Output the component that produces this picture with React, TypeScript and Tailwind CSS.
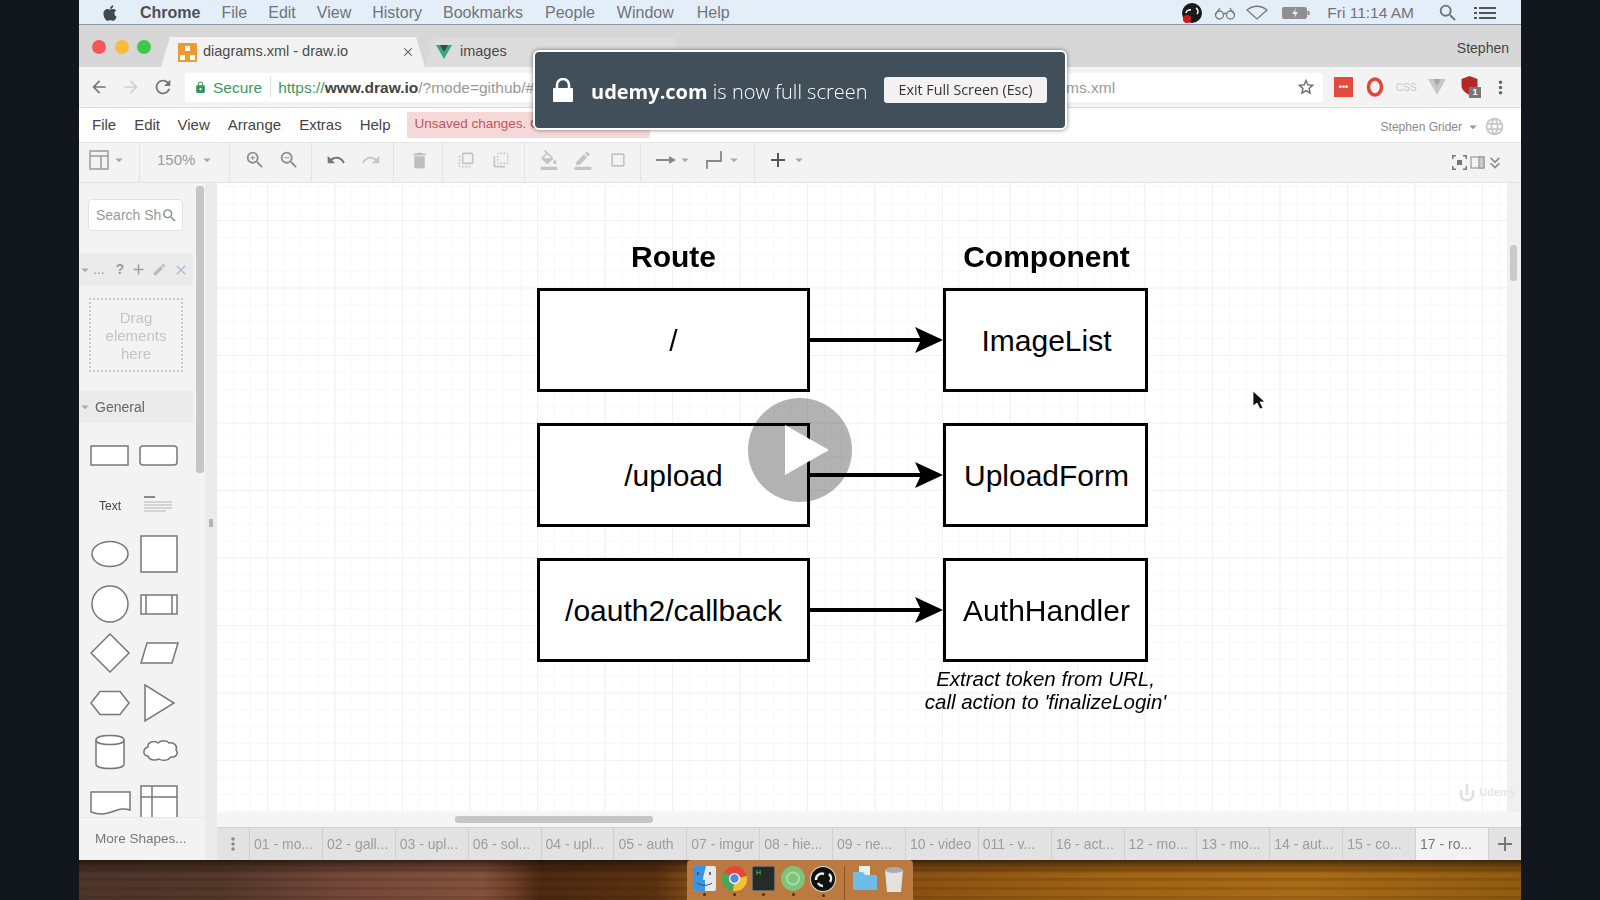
import type { ReactNode } from "react";
import { FaApple } from "react-icons/fa";
import {
  MdAdd,
  MdArrowBack,
  MdArrowDropDown,
  MdArrowForward,
  MdBorderColor,
  MdClose,
  MdCropSquare,
  MdDelete,
  MdEdit,
  MdFlipToBack,
  MdFlipToFront,
  MdFormatColorFill,
  MdKeyboardDoubleArrowDown,
  MdLanguage,
  MdLock,
  MdMoreVert,
  MdRedo,
  MdRefresh,
  MdSearch,
  MdStarBorder,
  MdUndo,
  MdZoomIn,
  MdZoomOut,
} from "react-icons/md";

const sans = "font-['Liberation_Sans',Arial,sans-serif]";

const Caret = ({ className = "" }: { className?: string }) => (
  <MdArrowDropDown className={`text-[18px] text-[#aaa] ${className}`} />
);

const MacMenuBar = () => (
  <div className="flex h-[25px] shrink-0 items-center border-b border-[#8d98a5] bg-[#e4eef8] pt-[1px] text-[16px] text-[#6f747b]">
    <FaApple className="ml-[22px] text-[18px] text-[#44484d]" />
    <span className="ml-[21px] font-bold text-[#4d5156]">Chrome</span>
    <span className="ml-[21px]">File</span>
    <span className="ml-[21px]">Edit</span>
    <span className="ml-[21px]">View</span>
    <span className="ml-[21px]">History</span>
    <span className="ml-[21px]">Bookmarks</span>
    <span className="ml-[22px]">People</span>
    <span className="ml-[22px]">Window</span>
    <span className="ml-[23px]">Help</span>
    <div className="ml-auto flex items-center">
      <svg width="20" height="20" viewBox="0 0 20 20">
        <circle cx="10" cy="10" r="10" fill="#1a1a1a" />
        <path d="M4 10a4 4 0 0 1 5-3M14 5a4 4 0 0 1 1 6M9 15a4 4 0 0 1 -3-2" stroke="#eee" strokeWidth="1.6" fill="none" />
        <circle cx="5" cy="16" r="4" fill="#d9141f" />
      </svg>
      <svg className="ml-[12px]" width="22" height="14" viewBox="0 0 22 14" fill="none" stroke="#777" strokeWidth="1.3">
        <circle cx="5.5" cy="9" r="4" />
        <circle cx="16.5" cy="9" r="4" />
        <path d="M9.5 8c1-1 2-1 3 0M2 8l4-6M20 8l-4-6" />
      </svg>
      <svg className="ml-[10px]" width="22" height="15" viewBox="0 0 22 15" fill="none" stroke="#777" strokeWidth="1.3">
        <path d="M1 5c6-5 14-5 20 0L11 14z" />
      </svg>
      <svg className="ml-[14px]" width="28" height="14" viewBox="0 0 28 14">
        <rect x="0" y="1" width="25" height="12" rx="2" fill="#8f8f8f" />
        <rect x="25.500" y="5" width="2" height="4" fill="#888" />
        <path d="M14 2l-4 6h3l-1 4 4-6h-3z" fill="#e4eef8" />
      </svg>
      <span className="ml-[17px] text-[15.500px]">Fri 11:14 AM</span>
      <MdSearch className="ml-[23px] text-[22px] text-[#6f747b]" />
      <svg className="ml-[15px] mr-[25px]" width="22" height="14" viewBox="0 0 22 14" fill="#555">
        <rect x="0" y="1" width="3" height="2" />
        <rect x="5" y="1" width="17" height="2" />
        <rect x="0" y="6" width="3" height="2" />
        <rect x="5" y="6" width="17" height="2" />
        <rect x="0" y="11" width="3" height="2" />
        <rect x="5" y="11" width="17" height="2" />
      </svg>
    </div>
  </div>
);

const TabStrip = () => (
  <div className="flex h-[42px] shrink-0 items-end bg-[#d7d7d7] text-[14.5px] text-[#4a4a4a]">
    <div className="mb-[13px] ml-[13px] flex items-center gap-[8.500px] self-end">
      <span className="h-[14px] w-[14px] rounded-full bg-[#f4575a]" />
      <span className="h-[14px] w-[14px] rounded-full bg-[#f9bb3c]" />
      <span className="h-[14px] w-[14px] rounded-full bg-[#3fc94b]" />
    </div>
    <div className="ml-[10px] flex h-[30px] w-[264px] items-center bg-[#f2f2f2] pl-[17px] pr-[10px] [clip-path:polygon(9px_0,calc(100%-9px)_0,100%_100%,0_100%)]">
      <svg width="19" height="19" viewBox="0 0 19 19" className="shrink-0">
        <rect width="19" height="19" rx="1" fill="#ef9a2f" />
        <rect x="7" y="3" width="5" height="5" fill="#fff" />
        <rect x="2" y="12" width="5" height="5" fill="#fff" />
        <rect x="12" y="12" width="5" height="5" fill="#fff" />
      </svg>
      <span className="ml-[6px]">diagrams.xml - draw.io</span>
      <MdClose className="ml-auto text-[14px] text-[#666]" />
    </div>
    <div className="flex h-[30px] w-[258px] items-center bg-[#dcdcdc] pl-[11px] text-[#4a4a4a] [clip-path:polygon(9px_0,calc(100%-9px)_0,100%_100%,0_100%)]">
      <svg width="16" height="14" viewBox="0 0 16 14">
        <path d="M0 0h16L8 14z" fill="#3aa776" />
        <path d="M4 0h8L8 7z" fill="#2d4a5c" />
      </svg>
      <span className="ml-[8px]">images</span>
    </div>
    <span className="ml-auto mb-[8px] mr-[12px] text-[14px] text-[#444]">Stephen</span>
  </div>
);

const UrlBar = () => (
  <div className="flex h-[41px] shrink-0 items-center border-b border-[#dcdcdc] bg-[#f3f3f3]">
    <MdArrowBack className="ml-[10px] text-[20px] text-[#777]" />
    <MdArrowForward className="ml-[12px] text-[20px] text-[#d0d0d0]" />
    <MdRefresh className="ml-[11px] text-[22px] text-[#777]" />
    <div className="ml-[11px] flex h-[29px] w-[1138px] items-center rounded-[3px] bg-white pl-[9px] text-[15.500px]">
      <MdLock className="text-[13px] text-[#2f9a58]" />
      <span className="ml-[6px] pt-[2px] text-[#3d9a62]">Secure</span>
      <span className="ml-[8px] h-[20px] w-px bg-[#ddd]" />
      <span className="ml-[7px] w-[837px] shrink-0 overflow-hidden whitespace-nowrap pt-[2px] text-right text-[#999]">
        <span className="float-left">
          <span className="text-[#3d9a62]">https://</span>
          <span className="font-bold text-[#444]">www.draw.io</span>
          /?mode=github/#Hsgrider
        </span>
        ms.xml
      </span>
      <MdStarBorder className="ml-auto mr-[7px] text-[20px] text-[#666]" />
    </div>
    <div className="ml-[11px] flex h-[20px] w-[19px] items-center justify-center bg-[#e34b3f] text-[9px] font-bold leading-none text-white">
      •••
    </div>
    <svg className="ml-[13px]" width="18" height="20" viewBox="0 0 18 20" fill="none" stroke="#e2453c" strokeWidth="3.500">
      <ellipse cx="9" cy="10" rx="6.500" ry="8" />
    </svg>
    <span className="ml-[12px] w-[19px] text-[10px] text-[#c9c9c9]">CSS</span>
    <svg className="ml-[13px]" width="18" height="16" viewBox="0 0 18 16">
      <path d="M0 0h18L9 16z" fill="#c8c8c8" />
      <path d="M5 0h8L9 7z" fill="#a8a8a8" />
    </svg>
    <div className="relative ml-[15px] h-[22px] w-[20px]">
      <svg width="17" height="19" viewBox="0 0 17 19">
        <path d="M8.500 0l8 3v7c0 4-4 7-8 9-4-2-8-5-8-9V3z" fill="#b5282a" />
      </svg>
      <span className="absolute bottom-0 right-0 flex h-[11px] w-[12px] items-center justify-center bg-[#777] text-[9px] font-bold text-white">
        1
      </span>
    </div>
    <MdMoreVert className="ml-[9px] text-[21px] text-[#666]" />
  </div>
);

const AppMenu = () => (
  <div className="flex h-[35px] shrink-0 items-center border-b border-[#e4e4e4] bg-white text-[15px] text-[#444]">
    <span className="ml-[13px]">File</span>
    <span className="ml-[18px]">Edit</span>
    <span className="ml-[17.500px]">View</span>
    <span className="ml-[18px]">Arrange</span>
    <span className="ml-[18px]">Extras</span>
    <span className="ml-[18px]">Help</span>
    <div className="ml-[16px] flex h-[26px] w-[243px] items-center rounded-[2px] bg-[#f7d8d9] pb-[2px] pl-[8px] text-[13.500px] text-[#bb5660]">
      Unsaved changes. Click here to save.
    </div>
    <div className="ml-auto flex items-center pr-[16px] pt-[3px] text-[12px] text-[#8a8a8a]">
      Stephen Grider
      <MdArrowDropDown className="ml-[2px] text-[18px] text-[#999]" />
      <MdLanguage className="ml-[2px] text-[21px] text-[#c7c7c7]" />
    </div>
  </div>
);

const Group = ({ className, children }: { className: string; children: ReactNode }) => (
  <div className={`flex h-full shrink-0 items-center border-r border-[#e4e4e4] pb-[5px] ${className}`}>{children}</div>
);

const Toolbar = () => (
  <div className="flex h-[40px] shrink-0 items-center border-b border-[#e2e2e2] bg-[#f3f3f3] text-[#a8a8a8]">
    <Group className="w-[61px] pl-[10px]">
      <svg width="20" height="20" viewBox="0 0 20 20" fill="none" stroke="#9a9a9a" strokeWidth="1.500">
        <rect x="1" y="1" width="18" height="18" />
        <path d="M1 6h18M12 6v13" />
      </svg>
      <Caret className="ml-[1px]" />
    </Group>
    <Group className="w-[90px] pl-[17px] text-[15px] text-[#9a9a9a]">
      150%
      <Caret className="ml-[3px]" />
    </Group>
    <Group className="w-[82px] pl-[14px] text-[22px] text-[#8f8f8f]">
      <MdZoomIn />
      <MdZoomOut className="ml-[12px]" />
    </Group>
    <Group className="w-[82px] pl-[14px] text-[20px]">
      <MdUndo className="text-[#777]" />
      <MdRedo className="ml-[15px] text-[#c8c8c8]" />
    </Group>
    <Group className="w-[49px] pl-[15px] text-[21px] text-[#bdbdbd]">
      <MdDelete />
    </Group>
    <Group className="w-[82px] pl-[13px] text-[20px] text-[#c4c4c4]">
      <MdFlipToFront />
      <MdFlipToBack className="ml-[15px]" />
    </Group>
    <Group className="w-[116px] pl-[14px] text-[20px] text-[#c4c4c4]">
      <MdFormatColorFill />
      <MdBorderColor className="ml-[14px]" />
      <MdCropSquare className="ml-[15px]" />
    </Group>
    <Group className="w-[114px] pl-[15px]">
      <svg width="20" height="10" viewBox="0 0 20 10">
        <path d="M0 5h15" stroke="#888" strokeWidth="2" />
        <path d="M13 1l7 4-7 4z" fill="#888" />
      </svg>
      <Caret />
      <svg className="ml-[10px]" width="20" height="20" viewBox="0 0 20 20" fill="none" stroke="#888" strokeWidth="1.800">
        <path d="M3 19v-8h14V1" />
      </svg>
      <Caret className="ml-[1px]" />
    </Group>
    <div className="flex items-center pb-[5px] pl-[11px]">
      <MdAdd className="text-[24px] text-[#555]" />
      <Caret />
    </div>
    <div className="ml-auto flex items-center gap-[3px] pr-[16px] text-[#9a9a9a]">
      <svg width="15" height="15" viewBox="0 0 15 15" fill="#777">
        <path d="M0 0h4v1.500H1.500V4H0zM11 0h4v4h-1.500V1.500H11zM0 11h1.500v2.500H4V15H0zM13.500 11H15v4h-4v-1.500h2.500z" />
        <rect x="5" y="5" width="5" height="5" />
      </svg>
      <svg width="15" height="13" viewBox="0 0 15 13" fill="none" stroke="#999" strokeWidth="1.200">
        <rect x="1" y="1" width="13" height="11" />
        <rect x="9" y="1" width="5" height="11" fill="#ccc" />
      </svg>
      <MdKeyboardDoubleArrowDown className="-ml-[3px] text-[20px] text-[#888]" />
    </div>
  </div>
);

const shape = "fill-white stroke-[#777] [stroke-width:1.5]";

const shapes: ReactNode[] = [
  <rect className={shape} x="5" y="15" width="37" height="19" />,
  <rect className={shape} x="5" y="15" width="37" height="19" rx="3" />,
  <text x="24" y="29" textAnchor="middle" fontSize="12" fill="#444" fontFamily="Liberation Sans">Text</text>,
  <>
    <rect x="9" y="15" width="11" height="2" fill="#888" />
    <path d="M9 21h28M9 24h28M9 27h28M9 30h22" stroke="#d4d4d4" strokeWidth="2" />
  </>,
  <ellipse className={shape} cx="24" cy="24" rx="18" ry="12.500" />,
  <rect className={shape} x="6" y="6" width="36" height="36" />,
  <circle className={shape} cx="24" cy="24" r="18" />,
  <>
    <rect className={shape} x="6" y="15" width="36" height="19" />
    <path d="M11 15v19M37 15v19" className={shape} />
  </>,
  <path className={shape} d="M24 5l19 19-19 19L5 24z" />,
  <path className={shape} d="M12 14h31l-6 20H6z" />,
  <path className={shape} d="M14 12.500h20L43 24l-9 11.500H14L5 24z" />,
  <path className={shape} d="M10 6l29 18-29 18z" />,
  <>
    <path className={shape} d="M10 12c0-6 28-6 28 0v24c0 6-28 6-28 0z" />
    <path className={shape} d="M10 12c0 6 28 6 28 0" />
  </>,
  <path
    className={shape}
    d="M13 19c-1-5 7-7 10-4 3-3 9-3 11 0 5-1 9 3 7 7 3 3 0 8-5 7-3 4-9 4-12 2-4 2-10 1-11-3-5 0-6-7 0-9z"
  />,
  <path className={shape} d="M5 14h39v18c-14-5-20 9-39 2z" />,
  <>
    <rect className={shape} x="6" y="8" width="36" height="50" />
    <path className={shape} d="M6 19h36M17 8v50" />
  </>,
];

const Sidebar = () => (
  <div className="flex w-[126px] shrink-0 flex-col bg-[#f3f3f3]">
    <div className="flex min-h-0 flex-1">
      <div className="flex w-[117px] flex-col">
        <div className="ml-[9px] mt-[16px] flex h-[33px] w-[95px] items-center justify-between rounded-[4px] border border-[#e2e2e2] bg-white pl-[7px] pr-[4px] text-[14px] text-[#999]">
          <span className="whitespace-nowrap">Search Sh</span>
          <MdSearch className="shrink-0 text-[17px] text-[#888]" />
        </div>
        <div className="mt-[22px] flex h-[34px] w-[114px] items-center bg-[#ebebeb] text-[14px] text-[#999]">
          <Caret className="-ml-[3px] -mr-[1px]" />
          <span>...</span>
          <span className="ml-[11px] font-bold">?</span>
          <MdAdd className="ml-[6px] text-[17px]" />
          <MdEdit className="ml-[5px] text-[15px] text-[#bbb]" />
          <MdClose className="ml-[6px] text-[16px] text-[#a9bed4]" />
        </div>
        <div className="ml-[10px] mt-[12px] flex h-[76px] w-[94px] items-center justify-center border-2 border-dotted border-[#c9c9c9] pt-[2px] text-center text-[15px] leading-[18px] text-[#c4c4c4]">
          Drag
          <br />
          elements
          <br />
          here
        </div>
        <div className="mt-[19px] flex h-[32px] w-[114px] shrink-0 items-center bg-[#ebebeb] text-[14px] text-[#666]">
          <Caret className="-ml-[3px]" />
          <span className="ml-[1px]">General</span>
        </div>
        <div className="ml-[7px] mt-[8px] grid grid-cols-[49px_49px] auto-rows-[49.500px] overflow-hidden">
          {shapes.map((s, i) => (
            <svg key={i} width="48" height="48" viewBox="0 0 48 48" className="overflow-hidden">
              {s}
            </svg>
          ))}
        </div>
      </div>
      <div className="w-[9px] pt-[3px]">
        <div className="h-[287px] w-[8px] rounded-[3px] bg-[#c6c6c6]" />
      </div>
    </div>
    <div className="flex h-[43px] shrink-0 items-center border-t border-[#e8e8e8] pl-[16px] text-[13.500px] text-[#777]">
      More Shapes...
    </div>
  </div>
);

const Splitter = () => (
  <div className="flex w-[12px] shrink-0 items-center justify-center bg-[#ebebeb] pt-[2px]">
    <span className="h-[8px] w-[4px] bg-[#b5b5b5]" />
  </div>
);

const Arrow = () => (
  <svg width="133" height="36" viewBox="0 0 133 36" className="shrink-0">
    <path d="M0 18h112" stroke="#000" strokeWidth="4" />
    <path d="M105 5l28 13-28 13 6-13z" fill="#000" />
  </svg>
);

const rows = [
  ["/", "ImageList"],
  ["/upload", "UploadForm"],
  ["/oauth2/callback", "AuthHandler"],
];

const Diagram = () => (
  <div className="pl-[320px] pt-[52px] text-black">
    <div className="flex h-[42px] items-center text-[30px] font-bold">
      <span className="w-[273px] text-center">Route</span>
      <span className="ml-[133px] w-[205px] pl-[2px] text-center">Component</span>
    </div>
    <div className="mt-[11px] flex flex-col gap-[31px] text-[30px]">
      {rows.map(([route, component]) => (
        <div key={route} className="flex items-center">
          <div className="flex h-[104px] w-[273px] shrink-0 items-center justify-center border-[3px] border-black bg-white pt-[1px]">
            {route}
          </div>
          <Arrow />
          <div className="flex h-[104px] w-[205px] shrink-0 items-center justify-center border-[3px] border-black bg-white pl-[2px] pt-[1px]">
            {component}
          </div>
        </div>
      ))}
    </div>
    <div className="ml-[406px] mt-[5px] w-[205px] whitespace-nowrap text-center text-[20.500px] italic leading-[23px]">
      <div className="-mx-[40px]">
        Extract token from URL,
        <br />
        call action to 'finalizeLogin'
      </div>
    </div>
  </div>
);

const Canvas = () => (
  <div className="relative flex min-w-0 flex-1 flex-col">
    <div className="flex min-h-0 flex-1">
      <div className="relative min-w-0 flex-1 overflow-hidden bg-white bg-[linear-gradient(#f1f1f1_1px,transparent_1px),linear-gradient(90deg,#f1f1f1_1px,transparent_1px),linear-gradient(#f8f8f8_1px,transparent_1px),linear-gradient(90deg,#f8f8f8_1px,transparent_1px)] bg-[size:67.500px_67.500px,67.500px_67.500px,16.875px_16.875px,16.875px_16.875px] bg-[position:50px_37px,50px_37px,50px_37px,50px_37px]">
        <Diagram />
        {/* mouse pointer sitting on the canvas */}
        <svg className="absolute left-[1035px] top-[207px]" width="14" height="20" viewBox="0 0 14 20">
          <path d="M1 1v15l4-3 3 6 3-1-3-6h5z" fill="#111" stroke="#fff" strokeWidth="0.800" />
        </svg>
      </div>
      <div className="w-[14px] shrink-0 bg-[#f0f0f0] pl-[3px] pt-[62px]">
        <div className="h-[36px] w-[7px] rounded-[3px] bg-[#c9c9c9]" />
      </div>
    </div>
    <div className="flex h-[15px] shrink-0 items-center bg-[#f5f5f5] pl-[238px]">
      <div className="h-[7px] w-[198px] rounded-[3px] bg-[#c6c6c6]" />
    </div>
    {/* udemy watermark runs over the right scrollbar */}
    <div className="absolute bottom-[25px] right-[5px] flex items-center text-[11px] font-bold text-[#e6e6e6]">
      <svg className="mr-[4px]" width="16" height="20" viewBox="0 0 16 20" fill="none" stroke="#e0e0e0" strokeWidth="2.500">
        <path d="M2 8v5c0 7 12 7 12 0V8M8 2v11" />
      </svg>
      Udemy
    </div>
  </div>
);

const pages = [
  "01 - mo...",
  "02 - gall...",
  "03 - upl...",
  "06 - sol...",
  "04 - upl...",
  "05 - auth",
  "07 - imgur",
  "08 - hie...",
  "09 - ne...",
  "10 - video",
  "011 - v...",
  "16 - act...",
  "12 - mo...",
  "13 - mo...",
  "14 - aut...",
  "15 - co...",
];

const PageTabs = () => (
  <div className="flex h-[33px] shrink-0 items-stretch border-t border-[#cfcfcf] bg-[#e2e2e2] text-[14px] text-[#9c9c9c]">
    <div className="flex w-[33px] shrink-0 items-center justify-center border-r border-[#cfcfcf]">
      <MdMoreVert className="text-[20px] text-[#888]" />
    </div>
    {pages.map((p) => (
      <div key={p} className="flex flex-1 items-center whitespace-nowrap border-r border-[#d0d0d0] pl-[4px]">
        {p}
      </div>
    ))}
    <div className="flex flex-1 items-center whitespace-nowrap bg-[#f2f2f2] pl-[4px] text-[#777]">17 - ro...</div>
    <div className="flex w-[33px] shrink-0 items-center justify-center border-l border-[#cfcfcf]">
      <MdAdd className="text-[24px] font-bold text-[#777]" />
    </div>
  </div>
);

const DockDot = () => <span className="h-[3px] w-[3px] rounded-full bg-[#5a2a10]" />;

const Dock = () => (
  <div className="mx-auto flex h-[40px] w-[226px] items-start rounded-t-[4px] bg-[#bb7a40] pl-[6px] pt-[6px]">
    <div className="flex flex-col items-center gap-[2px]">
      <svg width="23" height="25" viewBox="0 0 23 25">
        <rect width="23" height="25" rx="2" fill="#e4e9ee" />
        <path d="M0 2a2 2 0 0 1 2-2h11c-2 8-3 11-3 14h2v11H2a2 2 0 0 1-2-2z" fill="#3a94e6" />
        <path d="M5 6v3M17 6v3" stroke="#3b4a58" strokeWidth="1.500" />
        <path d="M4 17c5 3 11 3 15 0" stroke="#3b4a58" strokeWidth="1" fill="none" />
      </svg>
      <DockDot />
    </div>
    <div className="ml-[6px] flex flex-col items-center gap-[2px]">
      <svg width="25" height="25" viewBox="0 0 25 25">
        <circle cx="12.500" cy="12.500" r="12.500" fill="#e8453c" />
        <path d="M12.500 12.500L1.500 6A12.500 12.500 0 0 0 11 25z" fill="#4aa65a" />
        <path d="M12.500 12.500L25 10A12.500 12.500 0 0 1 11 25z" fill="#f2c230" />
        <circle cx="12.500" cy="12.500" r="5.500" fill="#fff" />
        <circle cx="12.500" cy="12.500" r="4.200" fill="#4a8ae8" />
      </svg>
      <DockDot />
    </div>
    <div className="ml-[5px] flex flex-col items-center gap-[2px]">
      <div className="h-[25px] w-[23px] rounded-[2px] border border-[#666] bg-[#262a28] pl-[3px] pt-[2px] text-[7px] leading-none text-[#52d35c]">
        H
      </div>
      <DockDot />
    </div>
    <div className="ml-[6px] flex flex-col items-center gap-[2px]">
      <svg width="24" height="25" viewBox="0 0 24 25">
        <ellipse cx="12" cy="12.500" rx="12" ry="12.500" fill="#7fc47c" />
        <circle cx="12" cy="12.500" r="6" fill="none" stroke="#a9dca6" strokeWidth="2" />
      </svg>
      <DockDot />
    </div>
    <div className="ml-[5px] flex flex-col items-center gap-[2px]">
      <svg width="26" height="26" viewBox="0 0 26 26">
        <circle cx="13" cy="13" r="13" fill="#ddd" />
        <circle cx="13" cy="13" r="12" fill="#111" />
        <path d="M6 14a6 6 0 0 1 8-6M19 8a6 6 0 0 1 1 8M13 20a6 6 0 0 1-5-3" stroke="#eee" strokeWidth="2.500" fill="none" />
      </svg>
      <DockDot />
    </div>
    <span className="ml-[8px] h-[34px] w-px bg-[#8d5226]" />
    <svg className="ml-[8px]" width="24" height="26" viewBox="0 0 24 26">
      <rect x="6" y="0" width="11" height="12" fill="#e6edf3" />
      <path d="M0 6h10l2 3h12v15H0z" fill="#6ebce8" />
    </svg>
    <svg className="ml-[7px]" width="20" height="26" viewBox="0 0 20 26">
      <path d="M1 4h18l-2 22H3z" fill="#e4e2de" />
      <ellipse cx="10" cy="4" rx="9" ry="3" fill="#a9adb0" />
    </svg>
  </div>
);

const Desktop = () => (
  <div className="flex h-[40px] shrink-0 items-end bg-[linear-gradient(180deg,rgba(20,10,5,0.6)_0,rgba(20,10,5,0)_14px),repeating-linear-gradient(180deg,rgba(30,12,4,0.14)_0,rgba(30,12,4,0.14)_2px,rgba(30,12,4,0)_4px,rgba(30,12,4,0)_9px),linear-gradient(90deg,#4d352a_0%,#54382c_10%,#72483a_18%,#84523e_28%,#6f4028_30%,#4c2a12_32%,#5a3210_40%,#8a5218_43%,#8a5212_58%,#a06414_72%,#aa6c16_85%,#8f5c10_100%)]">
    <Dock />
  </div>
);

const FullscreenToast = () => (
  <div className="absolute left-[533px] top-[50px] flex h-[80px] w-[534px] items-center rounded-[6px] border-2 border-white bg-[#414f5a] font-['Open_Sans',sans-serif] shadow-[0_0_4px_rgba(0,0,0,0.5)]">
    <svg className="ml-[18px]" width="20" height="24" viewBox="0 0 20 24">
      <path d="M4 10V7a6 6 0 0 1 12 0v3" fill="none" stroke="#fff" strokeWidth="2.500" />
      <rect x="0" y="10" width="20" height="14" rx="1" fill="#fff" />
    </svg>
    <span className="ml-[18px] whitespace-nowrap pt-[4px] text-[20px] text-white">
      <span className="font-bold">udemy.com</span> <span className="font-light">is now full screen</span>
    </span>
    <button className="ml-auto mr-[18px] flex h-[26px] w-[163px] items-center justify-center rounded-[3px] bg-[#f5f3f1] text-[14.300px] text-[#333]">
      Exit Full Screen (Esc)
    </button>
  </div>
);

const PlayButton = () => (
  <div className="absolute left-[748px] top-[398px] flex h-[104px] w-[104px] items-center justify-center rounded-full bg-black/30 pl-[14px]">
    <svg width="44" height="50" viewBox="0 0 44 50">
      <path d="M0 0l44 25L0 50z" fill="#fff" />
    </svg>
  </div>
);

export default function App() {
  return (
    <div className={`relative flex h-[900px] w-[1600px] justify-center overflow-hidden bg-[#12171d] ${sans}`}>
      <div className="flex w-[1442px] flex-col blur-[0.6px]">
        <MacMenuBar />
        <TabStrip />
        <UrlBar />
        <AppMenu />
        <Toolbar />
        <div className="flex min-h-0 flex-1">
          <Sidebar />
          <Splitter />
          <div className="flex min-w-0 flex-1 flex-col">
            <Canvas />
            <PageTabs />
          </div>
        </div>
        <Desktop />
      </div>
      <FullscreenToast />
      <PlayButton />
    </div>
  );
}
